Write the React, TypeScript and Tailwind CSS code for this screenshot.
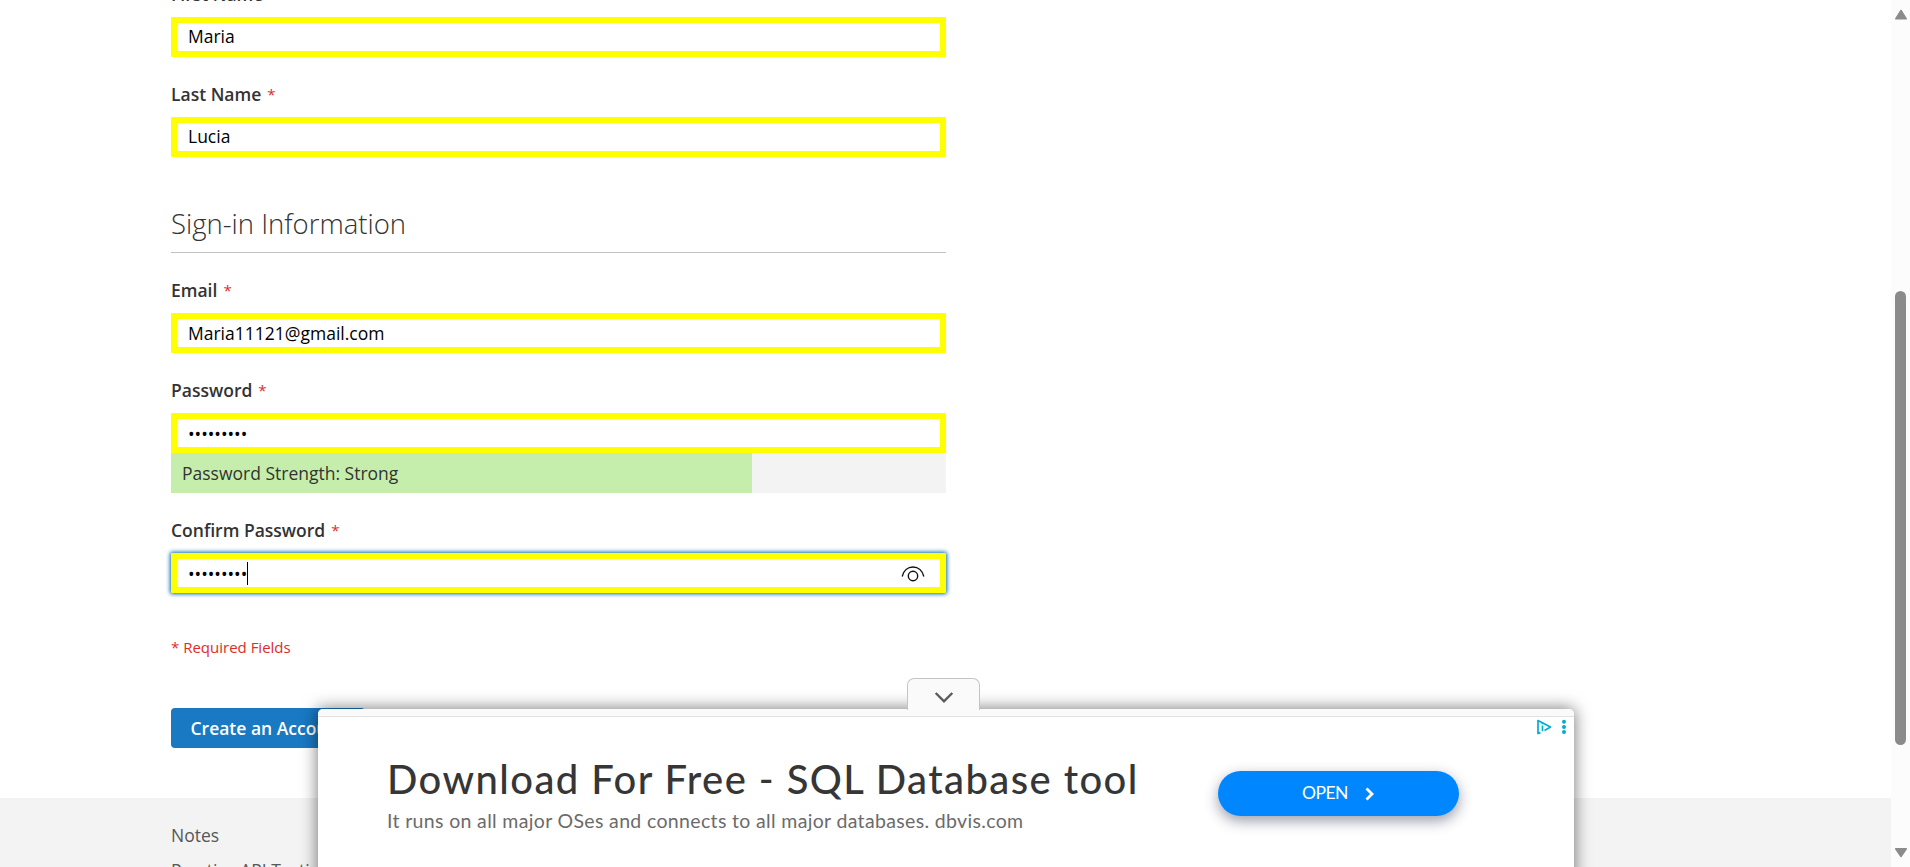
import type { ReactNode } from 'react';

function Label({ children }: { children: ReactNode }) {
  return (
    <div className="mb-[10px] flex h-[25px] items-center text-[17.5px] leading-[25px] font-semibold text-[#333]">
      {children}
      <span className="ml-[6px] text-[15px] font-normal text-[#e02b27]">*</span>
    </div>
  );
}

type FieldProps = {
  label: string;
  value: string;
  valueClass?: string;
  focused?: boolean;
  children?: ReactNode;
};

function Field({ label, value, valueClass = '', focused = false, children }: FieldProps) {
  return (
    <div className="w-[775px]">
      <Label>{label}</Label>
      <div
        className={
          focused
            ? 'flex h-10 items-center rounded-[1px] border-6 border-[#ff0] bg-white pr-[15px] pl-[11px] text-[17.5px] leading-[25px] text-black shadow-[0_0_4px_1px_#006bb4]'
            : 'flex h-10 items-center rounded-[1px] border-6 border-[#ff0] bg-white pr-[14px] pl-[11px] text-[17.5px] leading-[25px] text-black'
        }
      >
        <span className={valueClass}>{value}</span>
        {focused && (
          <>
            <span className="h-[23px] w-px bg-black" />
            <svg className="mt-[2px] ml-auto" width="24" height="18" viewBox="0 0 24 18" fill="none" stroke="#111" strokeWidth="1.4">
              <path d="M1.2 11.5C2.5 5.6 6.8 2 12 2s9.500 3.600 10.800 9.500" />
              <circle cx="12" cy="11" r="4.700" />
            </svg>
          </>
        )}
      </div>
      {children}
    </div>
  );
}

function Scrollbar() {
  return (
    <div className="flex w-[19px] shrink-0 flex-col items-center bg-[#fcfcfc]">
      <svg className="mt-[9px]" width="14" height="12" viewBox="0 0 14 12">
        <path d="M7 1.500 12.300 9.800H1.700Z" fill="#8b8b8b" stroke="#8b8b8b" strokeWidth="1.500" strokeLinejoin="round" />
      </svg>
      <div className="mt-[270px] h-[454px] w-[11px] rounded-full bg-[#8b8b8b]" />
      <svg className="mt-[102px]" width="14" height="12" viewBox="0 0 14 12">
        <path d="M7 9.500 12.300 1.800H1.700Z" fill="#8b8b8b" stroke="#8b8b8b" strokeWidth="1.500" strokeLinejoin="round" />
      </svg>
    </div>
  );
}

function AdBanner() {
  return (
    <div className="absolute top-[678px] left-[318px] flex w-[1256px] flex-col">
      <div className="relative z-10 ml-[589px] flex h-8 w-[73px] justify-center rounded-t-[7px] border border-b-0 border-[#c4c4c4] bg-[#fafafa] pt-[12px]">
        <svg width="20" height="14" viewBox="0 0 20 14" fill="none" stroke="#5a5a5a" strokeWidth="2.400">
          <path d="m1.700 2 8.300 8.300L18.300 2" />
        </svg>
      </div>
      <div className="-mt-px h-[189px] rounded-t-[5px] bg-white shadow-[0_0_16px_1px_rgba(0,0,0,0.5)]">
        <div className="h-2 rounded-t-[5px] border-b border-[#e2e2e2] bg-[#fafafa]" />
        <div className="flex">
          <div className="w-[900px] pt-[37px] pl-[69px] font-[Lato,sans-serif]">
            <div className="text-[40px] leading-[50px] font-medium tracking-[1.420px] whitespace-nowrap text-[#363636]">
              Download For Free - SQL Database tool
            </div>
            <div className="mt-[4px] text-[19.500px] leading-[26px] tracking-[0.340px] whitespace-nowrap text-[#6b6b6b]">
              It runs on all major OSes and connects to all major databases. dbvis.com
            </div>
          </div>
          <div className="mt-[54px] flex h-[45px] w-[241px] items-center justify-center rounded-full bg-[#0087ff] font-[Lato,sans-serif] text-[17.500px] tracking-[-0.500px] text-white shadow-[0_5px_14px_rgba(30,40,70,0.45)]">
            OPEN
            <svg className="ml-[17px]" width="10" height="14" viewBox="0 0 10 14" fill="none" stroke="white" strokeWidth="2.800">
              <path d="m1.500 1.500 5.500 5.500-5.500 5.500" />
            </svg>
          </div>
          <div className="mt-[2px] ml-[77px] flex gap-[9px]">
            <svg width="16" height="16" viewBox="0 0 16 16" fill="none" stroke="#00aecd" strokeWidth="1.700" strokeLinejoin="round">
              <path d="M4.500 13.600 2 14.500V1.500l12.500 6.500L8.500 11.500" />
              <path d="M6.500 6.500v5.700M6.500 3.900v1.300" />
            </svg>
            <svg width="6" height="16" viewBox="0 0 6 16" fill="#00aecd">
              <circle cx="3" cy="2.700" r="2" />
              <circle cx="3" cy="7.900" r="2" />
              <circle cx="3" cy="13" r="2" />
            </svg>
          </div>
        </div>
      </div>
    </div>
  );
}

export default function App() {
  return (
    <div className="relative flex h-[867px] w-[1910px] overflow-hidden bg-white font-['Open_Sans',sans-serif]">
      <main className="flex w-[1891px] flex-col">
        <div className="-mt-[18px] flex h-[816px] shrink-0 flex-col items-start pl-[171px]">
          <div className="flex flex-col gap-[25px]">
            <Field label="First Name" value="Maria" valueClass="pb-[2px]" />
            <Field label="Last Name" value="Lucia" valueClass="pb-[2px]" />
          </div>
          <h2 className="mb-[25px] flex h-[96px] w-[775px] items-end border-b border-[#c1c1c1] pb-[10px] text-[27.500px] leading-[36px] font-light text-[#333]">
            Sign-in Information
          </h2>
          <div className="flex flex-col gap-[25px]">
            <Field label="Email" value="Maria11121@gmail.com" />
            <Field label="Password" value="•••••••••" valueClass="pt-[2px]">
              <div className="h-10 bg-[#f3f3f3]">
                <div className="h-10 w-[581px] bg-[#c5eeac] pl-[11px] text-[17.500px] leading-[40px] text-[#333]">
                  Password Strength: Strong
                </div>
              </div>
            </Field>
            <Field label="Confirm Password" value="•••••••••" valueClass="pt-[2px]" focused />
          </div>
          <div className="mt-[44px] text-[15px] leading-[21px] text-[#e02b27]">* Required Fields</div>
          <button className="mt-[50px] h-10 w-[194px] rounded-[4px] bg-[#1979c3] text-[17.500px] leading-[20px] font-semibold whitespace-nowrap text-white">
            Create an Account
          </button>
        </div>
        <footer className="h-[69px] bg-[#f3f3f3] pt-[25px] pl-[171px] text-[17.500px] leading-[25px] text-[#575757]">
          <div>Notes</div>
          <div className="mt-[10px]">Practice API Testing</div>
        </footer>
      </main>
      <Scrollbar />
      <AdBanner />
    </div>
  );
}
